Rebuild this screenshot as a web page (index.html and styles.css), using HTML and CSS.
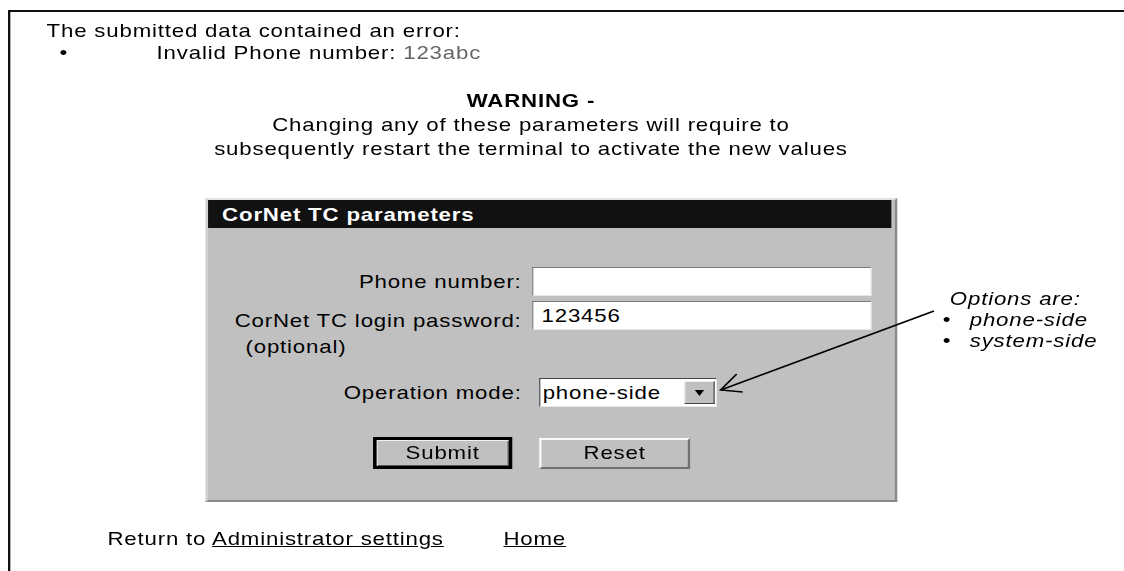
FILE: index.html
```html
<!DOCTYPE html>
<html lang="en">
<head>
    <meta charset="UTF-8">
    <title>CorNet TC parameters</title>
    <link rel="stylesheet" href="styles.css">
</head>
<body>
    <div class="page">
        <div class="errors">
            <p>The submitted data contained an error:</p>
            <ul>
                <li><span class="dot">&bull;</span><span>Invalid Phone number: <span class="bad">123abc</span></span></li>
            </ul>
        </div>
        <div class="warning">
            <strong>WARNING -</strong><br>
            Changing any of these parameters will require to<br>
            subsequently restart the terminal to activate the new values
        </div>
        <div class="settings">
            <form class="panel" onsubmit="return false">
                <div class="panel-title">CorNet TC parameters</div>
                <div class="fields">
                    <label for="phone">Phone number:</label>
                    <input type="text" id="phone" value="">
                    <label for="pwd" class="row2">CorNet TC login password:</label>
                    <input type="text" id="pwd" class="row2" value="123456">
                    <span class="optional">(optional)</span>
                    <span></span>
                    <label for="mode" class="row4">Operation mode:</label>
                    <div class="select row4">
                        <span class="select-value">phone-side</span>
                        <span class="select-btn"><svg width="8" height="6" viewBox="0 0 8 6"><path d="M0 0h8L4 6z" fill="#000"/></svg></span>
                    </div>
                    <div class="buttons-left"><button type="submit" class="btn btn-default">Submit</button></div>
                    <div class="buttons-right"><button type="reset" class="btn">Reset</button></div>
                </div>
            </form>
            <div class="note">
                <em>Options are:</em>
                <ul>
                    <li><span class="dot">&bull;</span><em>phone-side</em></li>
                    <li><span class="dot">&bull;</span><em>system-side</em></li>
                </ul>
            </div>
            <svg class="arrow" width="214" height="100" viewBox="0 0 250 100" preserveAspectRatio="none">
                <line x1="233" y1="11" x2="20" y2="90" stroke="#000" stroke-width="1.5" vector-effect="non-scaling-stroke"/>
                <polyline points="36,74 20,90 42,92" fill="none" stroke="#000" stroke-width="1.5" vector-effect="non-scaling-stroke"/>
            </svg>
        </div>
        <div class="footer">
            Return to <a href="#">Administrator settings</a>
            <a href="#" class="home">Home</a>
        </div>
    </div>
</body>
</html>
```

FILE: styles.css
```css
body {
    margin: 0;
    font-family: "Liberation Sans", Arial, sans-serif;
    font-size: 19px;
    letter-spacing: 0.7px;
    color: #000;
    background-color: #fff;
    overflow: hidden;
}
.page {
    margin: 10px 0 0 8px;
    border-top: 2px solid #111;
    border-left: 2px solid #111;
    width: 952px;
    height: 559px;
    transform: scaleX(1.17);
    transform-origin: 0 0;
}
.errors {
    padding: 8px 0 0 31px;
    line-height: 22px;
}
.errors p {
    margin: 0;
}
ul {
    list-style: none;
    margin: 0;
    padding: 0;
}
.errors li {
    display: flex;
}
.errors .dot {
    width: 94px;
    padding-left: 11px;
    box-sizing: border-box;
}
.bad {
    color: #666;
}
.warning {
    width: 890px;
    text-align: center;
    margin-top: 25px;
    line-height: 24px;
}
.settings {
    position: relative;
    display: flex;
    align-items: flex-start;
    margin-top: 37px;
}
.panel {
    margin: 0 0 0 167px;
    width: 587px;
    background-color: #c0c0c0;
    border: 2px solid;
    border-color: #e2e2e2 #8a8a8a #8a8a8a #cfcfcf;
    padding-bottom: 31px;
}
.panel-title {
    background-color: #111;
    color: #fff;
    font-weight: bold;
    height: 28px;
    line-height: 29px;
    padding-left: 12px;
    margin-right: 3px;
}
.fields {
    display: grid;
    grid-template-columns: 268px 290px;
    column-gap: 9px;
    align-items: center;
    margin-top: 39px;
}
.fields label {
    text-align: right;
    height: 29px;
    line-height: 29px;
}
.fields input {
    font-family: inherit;
    font-size: 19px;
    letter-spacing: 0.7px;
    height: 29px;
    box-sizing: border-box;
    margin: 0;
    padding: 0 7px;
    border: 1px solid;
    border-color: #7a7a7a #e8e8e8 #e8e8e8 #7a7a7a;
    background-color: #fff;
}
.row2 {
    margin-top: 10px;
}
.optional {
    padding-left: 32px;
    height: 24px;
    line-height: 24px;
}
.row4 {
    margin-top: 19px;
}
.select {
    margin-left: 6px;
    width: 152px;
    height: 29px;
    box-sizing: border-box;
    display: flex;
    align-items: center;
    background-color: #fff;
    border: 1px solid;
    border-color: #444 #e8e8e8 #e8e8e8 #444;
}
.select-value {
    flex: 1;
    padding-left: 2px;
}
.select-btn {
    display: flex;
    align-items: center;
    justify-content: center;
    width: 26px;
    height: 23px;
    margin-right: 1px;
    box-sizing: border-box;
    background-color: #c0c0c0;
    border: 1px solid;
    border-color: #f0f0f0 #444 #444 #f0f0f0;
}
.buttons-left {
    text-align: right;
    padding-right: 8px;
    margin-top: 30px;
}
.buttons-right {
    margin-top: 30px;
    padding-left: 6px;
}
.btn {
    font-family: inherit;
    font-size: 19px;
    letter-spacing: 0.7px;
    color: #000;
    background-color: #c0c0c0;
    height: 31px;
    width: 129px;
    border: 2px solid;
    border-color: #fafafa #707070 #707070 #fafafa;
    padding: 0;
    cursor: pointer;
}
.btn-default {
    width: 119px;
    height: 32px;
    border: 3px solid #000;
    box-shadow: inset 1px 1px 0 #f0f0f0, inset -1px -1px 0 #555;
}
.note {
    margin: 90px 0 0 45px;
    line-height: 21px;
}
.note ul {
    margin-left: -6px;
}
.note .dot {
    display: inline-block;
    width: 23px;
    font-style: normal;
}
.arrow {
    position: absolute;
    left: 590px;
    top: 102px;
}
.footer {
    margin: 26px 0 0 83px;
    line-height: 22px;
}
.footer a {
    color: #000;
}
.footer .home {
    margin-left: 45px;
}
```
